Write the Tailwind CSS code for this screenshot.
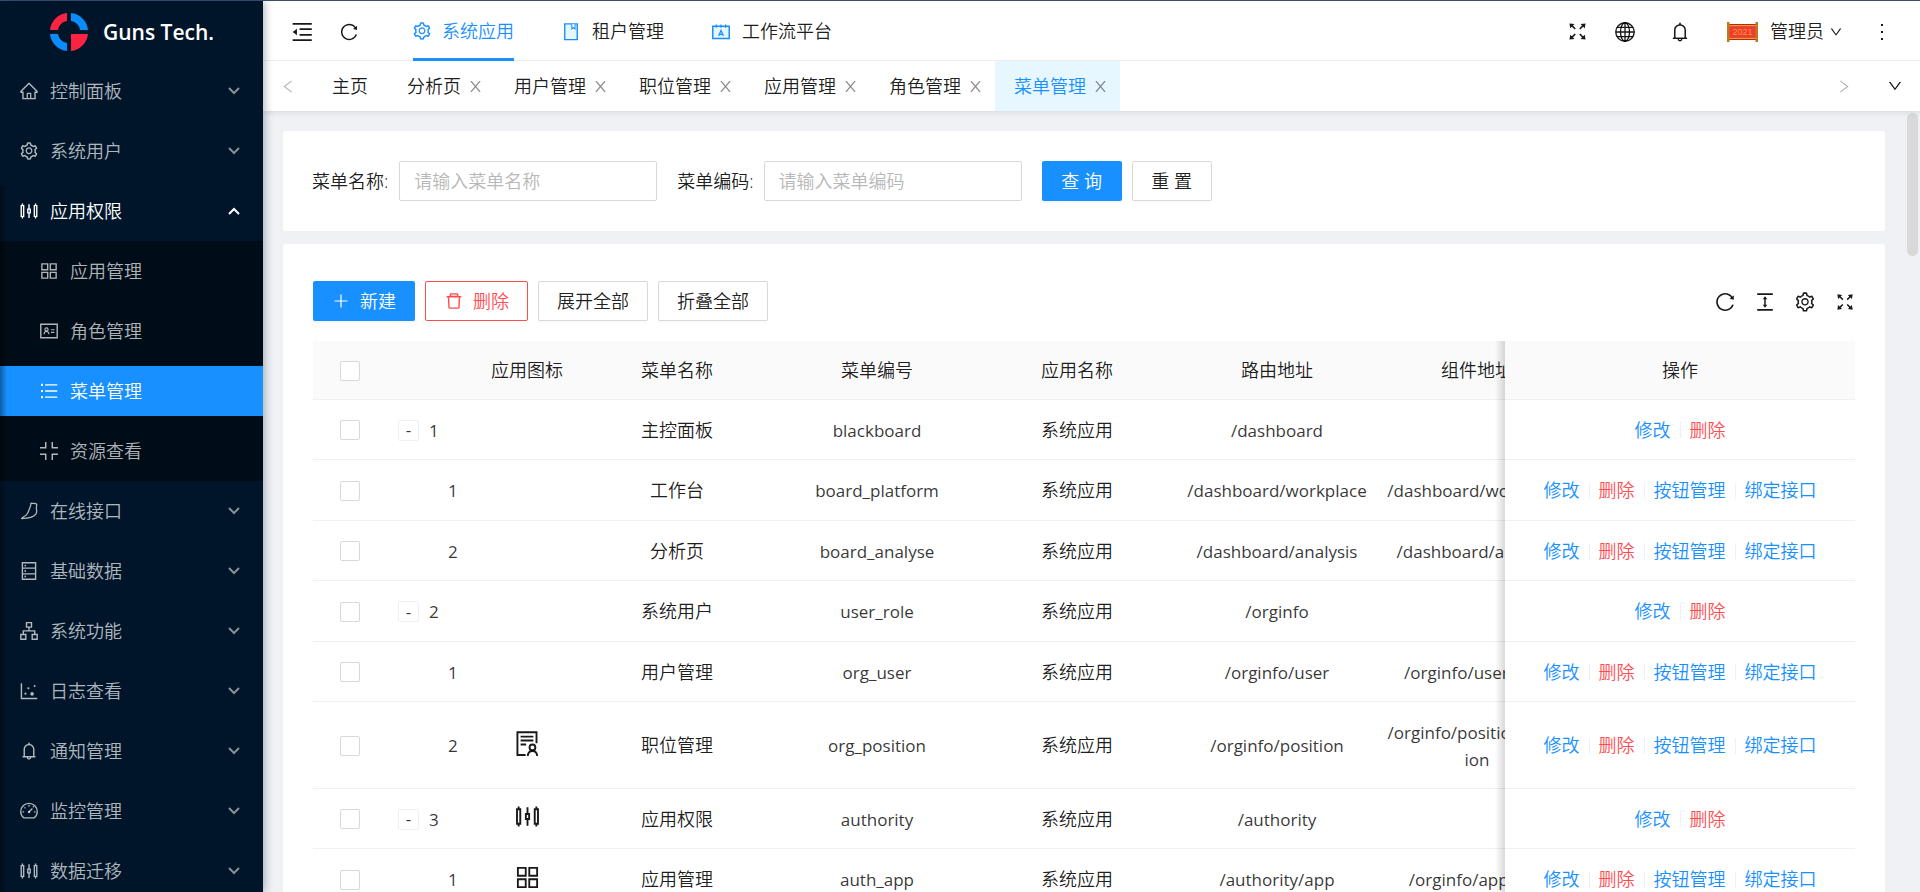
<!DOCTYPE html>
<html lang="zh-CN">
<head>
<meta charset="utf-8">
<title>Guns Tech.</title>
<script src="https://cdn.jsdelivr.net/npm/@tailwindcss/browser@4"></script>
</head>
<body class="h-screen overflow-hidden bg-[#eff1f5] font-['Open_Sans','Noto_Sans_CJK_SC',sans-serif] text-[18px] leading-[27px] font-[350] text-black/90">

<svg class="hidden" aria-hidden="true">
  <defs>
    <symbol id="i-home" viewBox="0 0 1024 1024"><path fill="currentColor" d="M946.5 505L560.1 118.8l-25.9-25.9a31.5 31.5 0 00-44.4 0L77.5 505a63.9 63.9 0 00-18.8 46c.4 35.2 29.7 63.3 64.9 63.3h42.5V940h691.8V614.3h43.4c17.1 0 33.2-6.7 45.3-18.8a63.6 63.6 0 0018.7-45.3c0-17-6.7-33.1-18.8-45.2zM568 868H456V664h112v204zm217.9-325.7V868H632V640c0-22.1-17.9-40-40-40H432c-22.1 0-40 17.9-40 40v228H238.1V542.3h-96l370-369.7 23.1 23.1L882 542.3h-96.1z"/></symbol>
    <symbol id="i-setting" viewBox="0 0 1024 1024"><path fill="currentColor" d="M924.8 625.7l-65.5-56c3.1-19 4.7-38.4 4.7-57.8s-1.6-38.8-4.7-57.8l65.5-56a32.03 32.03 0 009.3-35.2l-.9-2.6a443.74 443.74 0 00-79.7-137.9l-1.8-2.1a32.12 32.12 0 00-35.1-9.5l-81.3 28.9c-30-24.6-63.5-44-99.7-57.6l-15.7-85a32.05 32.05 0 00-25.8-25.7l-2.7-.5c-52.1-9.4-106.9-9.4-159 0l-2.7.5a32.05 32.05 0 00-25.8 25.7l-15.8 85.4a351.86 351.86 0 00-99 57.4l-81.9-29.1a32 32 0 00-35.1 9.5l-1.8 2.1a446.02 446.02 0 00-79.7 137.9l-.9 2.6c-4.5 12.5-.8 26.5 9.3 35.2l66.3 56.6c-3.1 18.8-4.6 38-4.6 57.1 0 19.2 1.5 38.4 4.6 57.1L99 625.5a32.03 32.03 0 00-9.3 35.2l.9 2.6c18.1 50.4 44.9 96.9 79.7 137.9l1.8 2.1a32.12 32.12 0 0035.1 9.5l81.9-29.1c29.8 24.5 63.1 43.9 99 57.4l15.8 85.4a32.05 32.05 0 0025.8 25.7l2.7.5a449.4 449.4 0 00159 0l2.7-.5a32.05 32.05 0 0025.8-25.7l15.7-85a350 350 0 0099.7-57.6l81.3 28.9a32 32 0 0035.1-9.5l1.8-2.1c34.8-41.1 61.6-87.5 79.7-137.9l.9-2.6c4.5-12.3.8-26.3-9.3-35zM788.3 465.9c2.5 15.1 3.8 30.6 3.8 46.1s-1.3 31-3.8 46.1l-6.6 40.1 74.7 63.9a370.03 370.03 0 01-42.6 73.6L721 702.8l-31.4 25.8c-23.9 19.6-50.5 35-79.3 45.8l-38.1 14.3-17.9 97a377.5 377.5 0 01-85 0l-17.9-97.2-37.8-14.5c-28.5-10.8-55-26.2-78.7-45.7l-31.4-25.9-93.4 33.2c-17-22.9-31.2-47.6-42.6-73.6l75.5-64.5-6.5-40c-2.4-14.9-3.7-30.3-3.7-45.5 0-15.3 1.2-30.6 3.7-45.5l6.5-40-75.5-64.5c11.3-26.1 25.6-50.7 42.6-73.6l93.4 33.2 31.4-25.9c23.7-19.5 50.2-34.9 78.7-45.7l37.9-14.3 17.9-97.2c28.1-3.2 56.8-3.2 85 0l17.9 97 38.1 14.3c28.7 10.8 55.4 26.2 79.3 45.8l31.4 25.8 92.8-32.9c17 22.9 31.2 47.6 42.6 73.6L781.8 426l6.5 39.9zM512 326c-97.2 0-176 78.8-176 176s78.8 176 176 176 176-78.8 176-176-78.8-176-176-176zm79.2 255.2A111.6 111.6 0 01512 614c-29.9 0-58-11.7-79.2-32.8A111.6 111.6 0 01400 502c0-29.9 11.7-58 32.8-79.2C454 401.6 482.1 390 512 390c29.9 0 58 11.6 79.2 32.8A111.6 111.6 0 01624 502c0 29.9-11.7 58-32.8 79.2z"/></symbol>
    <symbol id="i-reload" viewBox="0 0 1024 1024"><path fill="currentColor" d="M909.1 209.3l-56.4 44.1C775.8 155.1 656.2 92 521.9 92 290 92 102.3 279.5 102 511.5 101.7 743.7 289.8 932 521.9 932c181.3 0 335.8-115 394.6-276.1 1.5-4.2-.7-8.9-4.9-10.3l-56.7-19.5a8 8 0 00-10.1 4.8c-1.8 5-3.8 10-5.9 14.9-17.3 41-42.1 77.8-73.7 109.4A344.77 344.77 0 01655.9 829c-42.3 17.9-87.4 27-133.8 27-46.5 0-91.5-9.1-133.8-27A341.5 341.5 0 01279 755.2a342.16 342.16 0 01-73.7-109.4c-17.9-42.4-27-87.4-27-133.9s9.1-91.5 27-133.9c17.3-41 42.1-77.8 73.7-109.4 31.6-31.6 68.4-56.4 109.3-73.8 42.3-17.9 87.4-27 133.8-27 46.5 0 91.5 9.1 133.8 27a341.5 341.5 0 01109.3 73.8c9.9 9.9 19.2 20.4 27.8 31.4l-60.2 47a8 8 0 003 14.1l175.6 43c5 1.2 9.9-2.6 9.9-7.7l.8-180.9c-.1-6.6-7.8-10.3-13-6.2z"/></symbol>
    <symbol id="i-down" viewBox="0 0 1024 1024"><path fill="currentColor" d="M884 256h-75c-5.1 0-9.9 2.5-12.9 6.6L512 654.2 227.9 262.6c-3-4.1-7.8-6.6-12.9-6.6h-75c-6.5 0-10.3 7.4-6.5 12.7l352.6 486.1c12.8 17.6 39 17.6 51.7 0l352.6-486.1c3.9-5.3.1-12.7-6.4-12.7z"/></symbol>
    <symbol id="i-bell" viewBox="0 0 1024 1024"><path fill="currentColor" d="M816 768h-24V428c0-141.1-104.3-257.7-240-277.1V112c0-22.1-17.9-40-40-40s-40 17.9-40 40v38.900c-135.700 19.400-240 136-240 277.100v340h-24c-17.700 0-32 14.300-32 32v32c0 4.400 3.600 8 8 8h216c0 61.800 50.200 112 112 112s112-50.200 112-112h216c4.400 0 8-3.600 8-8v-32c0-17.700-14.300-32-32-32zM512 888c-26.500 0-48-21.500-48-48h96c0 26.500-21.500 48-48 48zM304 768V428c0-55.600 21.600-107.800 60.900-147.100S456.400 220 512 220c55.600 0 107.800 21.600 147.100 60.900S720 372.400 720 428v340H304z"/></symbol>
    <symbol id="i-delete" viewBox="0 0 1024 1024"><path fill="currentColor" fill-opacity=".3" d="M352 176h320v80H352z"/><path fill="currentColor" d="M360 184h-8c4.400 0 8-3.600 8-8v8h304v-8c0 4.400 3.600 8 8 8h-8v72h72v-80c0-35.300-28.700-64-64-64H352c-35.300 0-64 28.700-64 64v80h72v-72zm504 72H160c-17.700 0-32 14.300-32 32v32c0 4.400 3.600 8 8 8h60.400l24.700 523c1.600 34.100 29.800 61 63.900 61h454c34.200 0 62.300-26.800 63.900-61l24.700-523H888c4.400 0 8-3.600 8-8v-32c0-17.700-14.300-32-32-32zM731.300 840H292.700l-24.200-512h487l-24.200 512z"/></symbol>
    <symbol id="i-sliders" viewBox="0 0 1024 1024"><g fill="none" stroke="currentColor" stroke-width="72"><path d="M114 236h124v552H114zM176 130v106M176 788v106M450 418h124v188H450zM512 160v258M512 606v258M786 236h124v552H786zM848 130v106M848 788v106"/></g></symbol>
    <symbol id="i-app" viewBox="0 0 1024 1024"><path fill="none" stroke="currentColor" stroke-width="70" d="M147 147h298v298H147zM579 147h298v298H579zM147 579h298v298H147zM579 579h298v298H579z"/></symbol>
    <symbol id="i-idcard" viewBox="-57 -57 1138 1138"><g fill="none" stroke="currentColor"><path stroke-width="80" d="M45 130h934v764H45z"/><circle cx="370" cy="420" r="90" stroke-width="68"/><path stroke-width="68" d="M226 700c10-100 60-160 144-160s134 60 144 160M620 440h200M620 590h200"/></g></symbol>
    <symbol id="i-list" viewBox="0 0 1024 1024"><path fill="currentColor" d="M312 164h624v72H312zM312 476h624v72H312zM312 788h624v72H312zM104 144h96v112h-96zM104 456h96v112h-96zM104 768h96v112h-96z"/></symbol>
    <symbol id="i-compress" viewBox="-57 -57 1138 1138"><path fill="none" stroke="currentColor" stroke-width="84" d="M0 326h326V0M698 0v326h326M0 698h326v326M698 1024V698h326"/></symbol>
    <symbol id="i-interface" viewBox="0 0 1024 1024"><path fill="none" stroke="currentColor" stroke-width="64" stroke-linejoin="round" d="M610 110c70 40 200-20 290 40 20 80-20 160-10 250 10 90 50 160-30 270-110 150-360 220-730 230 60-80 170-110 250-190 90-90 110-190 150-300 30-100 90-160 80-300z"/></symbol>
    <symbol id="i-database" viewBox="-57 -57 1138 1138"><path fill="none" stroke="currentColor" stroke-width="78" d="M136 44h752v936H136zM136 352h752M136 672h752"/><g fill="currentColor"><circle cx="300" cy="200" r="50"/><circle cx="300" cy="512" r="50"/><circle cx="300" cy="824" r="50"/></g></symbol>
    <symbol id="i-apartment" viewBox="-40 -40 1104 1104"><path fill="none" stroke="currentColor" stroke-width="76" d="M374 50h276v250H374zM60 704h276v266H60zM688 704h276v266H688zM512 300v200M198 704V506h628v198"/></symbol>
    <symbol id="i-dot" viewBox="0 0 1024 1024"><path fill="none" stroke="currentColor" stroke-width="72" d="M124 110v784h810"/><g fill="currentColor"><circle cx="330" cy="650" r="56"/><circle cx="670" cy="660" r="92"/><circle cx="480" cy="370" r="56"/><circle cx="800" cy="260" r="52"/></g></symbol>
    <symbol id="i-dashboard" viewBox="-45 -35 1114 1114"><g fill="none" stroke="currentColor" stroke-width="72"><path d="M220 900C110 810 50 690 50 560a462 462 0 01924 0c0 130-60 250-170 340z"/><path d="M512 580l190-200M512 190v90M150 570h90M784 570h90M260 320l54 54M728 316l54-54"/></g><circle cx="512" cy="580" r="68" fill="currentColor"/></symbol>
    <symbol id="i-fold" viewBox="0 0 1024 1024"><path fill="currentColor" d="M112 124h816v80H112zM408 350h520v76H408zM408 598h520v76H408zM112 820h816v80H112zM116 512l180-142v284z"/></symbol>
    <symbol id="i-expand" viewBox="0 0 1024 1024"><path fill="currentColor" d="M120 120l246 28-76 76 138 138-54 54-138-138-78 78zM904 120l-246 28 76 76-138 138 54 54 138-138 78 78zM120 904l246-28-76-76 138-138-54-54-138 138-78-78zM904 904l-246-28 76-76-138-138 54-54 138 138 78-78z"/></symbol>
    <symbol id="i-globe" viewBox="0 0 1024 1024"><g fill="none" stroke="currentColor" stroke-width="62"><circle cx="512" cy="512" r="430"/><ellipse cx="512" cy="512" rx="210" ry="430"/><path d="M512 82v860M82 512h860M140 300h744M140 724h744"/></g></symbol>
    <symbol id="i-colheight" viewBox="0 0 1024 1024"><path fill="currentColor" d="M112 70h800v78H112zM112 876h800v78H112zM512 220l116 150h-78v284h78L512 804 396 654h78V370h-78z"/></symbol>
    <symbol id="i-audit" viewBox="0 0 1024 1024"><g fill="none" stroke="currentColor" stroke-width="72"><path d="M440 950H130V85h724v420M250 250h484M250 400h484M250 550h210"/><circle cx="700" cy="660" r="110"/><path d="M520 985c10-120 80-190 180-190s170 70 180 190"/></g></symbol>
    <symbol id="i-book" viewBox="-57 -45 1138 1138"><path fill="#e6f7ff" stroke="currentColor" stroke-width="80" d="M156 64h712v896H156z"/><path fill="#fff" stroke="currentColor" stroke-width="60" d="M560 90v260l90-70 90 70V90"/></symbol>
    <symbol id="i-calendar" viewBox="-50 -50 1124 1124"><path fill="#e6f7ff" stroke="currentColor" stroke-width="84" d="M50 190h924v690H50z"/><path fill="none" stroke="currentColor" stroke-width="72" d="M250 90v190M510 90v190M774 90v190M380 740l132-320 132 320M430 640h164"/></symbol>
    <symbol id="i-arrow" viewBox="0 0 12 8"><path fill="none" stroke="currentColor" stroke-width="2" d="M1 1l5 5 5-5"/></symbol>
    <symbol id="i-x" viewBox="0 0 12 12"><path fill="none" stroke="currentColor" stroke-width="1.300" d="M1 0l10 12M11 0L1 12"/></symbol>
    <symbol id="i-chev" viewBox="0 0 10 14"><path fill="none" stroke="currentColor" stroke-width="1.200" d="M9 1L1 7l8 6"/></symbol>
  </defs>
</svg>

<div class="flex h-full flex-col border-t border-[#3b5174]">
  <div class="flex min-h-0 flex-1">

    <aside class="relative z-20 flex w-[263px] shrink-0 flex-col bg-[#001529] shadow-[2px_0_8px_rgba(0,21,41,0.3)]">
      <a href="#" class="flex h-[60px] shrink-0 items-center gap-[15px] pt-[2px] pl-[50px] text-[21px] font-semibold text-white">
        <svg class="size-[38px]" viewBox="0 0 38 38" aria-hidden="true">
          <path fill="#fa2342" d="M17 0v8A11 11 0 0 0 8 17H0A19 19 0 0 1 17 0zM21 21h17a19 19 0 0 1-17 17z"/>
          <path fill="#0a8cff" d="M21 0a19 19 0 0 1 17 17h-8a11 11 0 0 0-9-9zM0 21h8a11 11 0 0 0 9 9v8A19 19 0 0 1 0 21z"/>
        </svg>
        Guns Tech.
      </a>
      <nav class="min-h-0 flex-1 overflow-hidden" aria-label="主菜单"><ul id="menu"></ul></nav>
      <div class="pointer-events-none absolute top-[185px] bottom-0 left-0 w-[7px] bg-linear-to-r from-black/35 to-transparent"></div>
    </aside>

    <div class="flex min-w-0 flex-1 flex-col">
      <header class="relative z-10 shrink-0 bg-white shadow-[0_1px_6px_rgba(0,21,41,0.12)]">
        <div class="flex h-[60px] items-center border-b border-[#eeeeee] pt-[2px]">
          <button class="ml-[27px]" aria-label="收起菜单"><svg class="size-[24px]"><use href="#i-fold"/></svg></button>
          <button class="ml-[25px]" aria-label="刷新"><svg class="size-[20px]"><use href="#i-reload"/></svg></button>
          <nav class="-mt-[2px] ml-[54px] flex h-[60px] gap-[48px]" aria-label="应用">
            <a href="#" class="flex items-center gap-[10px] border-b-[3px] border-[#1890ff] pt-[4px] text-[#1890ff]"><svg class="-ml-px size-[20px]"><use href="#i-setting"/></svg>系统应用</a>
            <a href="#" class="flex items-center gap-[11px] pt-[2px]"><svg class="-ml-px size-[20px] text-[#1890ff]"><use href="#i-book"/></svg>租户管理</a>
            <a href="#" class="flex items-center gap-[11px] pt-[2px]"><svg class="-ml-px size-[20px] text-[#1890ff]"><use href="#i-calendar"/></svg>工作流平台</a>
          </nav>
          <div class="ml-auto flex items-center">
            <button aria-label="全屏"><svg class="size-[21px]"><use href="#i-expand"/></svg></button>
            <button class="ml-[26px]" aria-label="语言"><svg class="size-[22px]"><use href="#i-globe"/></svg></button>
            <button class="ml-[33px]" aria-label="消息"><svg class="size-[22px]"><use href="#i-bell"/></svg></button>
            <button class="ml-[36px] flex items-center">
              <svg class="h-[20px] w-[31px]" viewBox="0 0 31 20" aria-hidden="true">
                <path fill="#b5262b" d="M2 2h27v16H2z"/><path fill="#f8a01c" d="M2 3h27v1.500H2zM2 15.500h27V17H2z"/><path fill="#f03a35" d="M2 4.500h27v11H2z"/>
                <path fill="#c0781a" d="M0 0h2.500v20H0zM28.500 0H31v20h-2.500z"/>
                <text x="15.500" y="13" text-anchor="middle" font-family="Liberation Sans" font-size="9" font-weight="normal" fill="#f9a01f">2021</text>
              </svg>
              <span class="ml-[12px]">管理员</span>
              <svg class="ml-[5px] size-[14px]"><use href="#i-down"/></svg>
            </button>
            <button class="mr-[28px] ml-[29px]" aria-label="更多"><svg class="size-[20px]" viewBox="0 0 20 20"><g fill="currentColor"><rect x="9" y="2" width="2" height="2"/><rect x="9" y="9" width="2" height="2"/><rect x="9" y="16" width="2" height="2"/></g></svg></button>
          </div>
        </div>
        <div class="flex h-[50px] items-center">
          <button class="mr-[21px] ml-[20px] text-black/30" aria-label="向左"><svg class="h-[13px] w-[10px]"><use href="#i-chev"/></svg></button>
          <div class="flex h-full" id="tabs"></div>
          <button class="ml-auto text-black/30" aria-label="向右"><svg class="h-[13px] w-[10px] rotate-180"><use href="#i-chev"/></svg></button>
          <button class="mr-[17px] ml-[38px]" aria-label="标签操作"><svg class="size-[16px]"><use href="#i-down"/></svg></button>
        </div>
      </header>

      <main class="relative flex min-h-0 flex-1 flex-col gap-[13px] overflow-hidden pt-[20px] pr-[35px] pl-[20px]">
        <form class="flex h-[100px] shrink-0 items-center rounded-[2px] bg-white px-[29px]" onsubmit="return false">
          <label for="menuName" class="mr-[11px]">菜单名称:</label>
          <input id="menuName" type="text" placeholder="请输入菜单名称" class="h-[40px] w-[258px] rounded-[2px] border border-[#d9d9d9] px-[14px] placeholder:text-[#b8b8b8]">
          <label for="menuCode" class="mr-[10px] ml-[20px]">菜单编码:</label>
          <input id="menuCode" type="text" placeholder="请输入菜单编码" class="h-[40px] w-[258px] rounded-[2px] border border-[#d9d9d9] px-[14px] placeholder:text-[#b8b8b8]">
          <button type="submit" class="ml-[20px] h-[40px] w-[80px] rounded-[2px] bg-[#1890ff] text-white shadow-[0_2px_0_rgba(0,0,0,0.04)]">查 询</button>
          <button type="reset" class="ml-[10px] h-[40px] w-[80px] rounded-[2px] border border-[#d9d9d9] bg-white shadow-[0_2px_0_rgba(0,0,0,0.02)]">重 置</button>
        </form>

        <section class="shrink-0 rounded-[2px] bg-white px-[30px] pt-[37px] pb-[30px]">
          <div class="flex items-center gap-[10px]">
            <button class="flex h-[40px] items-center gap-[10px] rounded-[2px] bg-[#1890ff] px-[19px] text-white shadow-[0_2px_0_rgba(0,0,0,0.04)]"><svg class="size-[18px]" viewBox="0 0 18 18"><path stroke="currentColor" stroke-width="1.200" d="M9 2.500v13M2.500 9h13"/></svg>新建</button>
            <button class="flex h-[40px] items-center gap-[9px] rounded-[2px] border border-[#ff4d4f] bg-white px-[18px] text-[#ff4d4f]"><svg class="size-[20px]"><use href="#i-delete"/></svg>删除</button>
            <button class="h-[40px] rounded-[2px] border border-[#d9d9d9] bg-white px-[18px] shadow-[0_2px_0_rgba(0,0,0,0.02)]">展开全部</button>
            <button class="h-[40px] rounded-[2px] border border-[#d9d9d9] bg-white px-[18px] shadow-[0_2px_0_rgba(0,0,0,0.02)]">折叠全部</button>
            <div class="ml-auto flex items-center gap-[19px] pt-[2px]">
              <button aria-label="刷新表格"><svg class="size-[22px]"><use href="#i-reload"/></svg></button>
              <button aria-label="密度"><svg class="size-[20px]"><use href="#i-colheight"/></svg></button>
              <button aria-label="列设置"><svg class="size-[22px]"><use href="#i-setting"/></svg></button>
              <button aria-label="全屏表格"><svg class="size-[20px]"><use href="#i-expand"/></svg></button>
            </div>
          </div>
          <div class="mt-[20px] overflow-hidden">
            <table class="w-full min-w-[1614px] table-fixed border-separate border-spacing-0 text-center">
              <colgroup><col class="w-[74px]"><col class="w-[90px]"><col class="w-[100px]"><col class="w-[200px]"><col class="w-[200px]"><col class="w-[200px]"><col class="w-[200px]"><col class="w-[200px]"><col class="w-[350px]"></colgroup>
              <thead>
                <tr class="h-[59px]">
                  <th class="border-b border-[#f0f0f0] bg-[#fafafa] pt-px font-[350]"><input type="checkbox" aria-label="全选" class="mx-auto block size-[20px] appearance-none rounded-[2px] border border-[#d9d9d9] bg-white"></th>
                  <th class="border-b border-[#f0f0f0] bg-[#fafafa]"></th>
                  <th class="border-b border-[#f0f0f0] bg-[#fafafa] pt-px font-[350]">应用图标</th>
                  <th class="border-b border-[#f0f0f0] bg-[#fafafa] pt-px font-[350]">菜单名称</th>
                  <th class="border-b border-[#f0f0f0] bg-[#fafafa] pt-px font-[350]">菜单编号</th>
                  <th class="border-b border-[#f0f0f0] bg-[#fafafa] pt-px font-[350]">应用名称</th>
                  <th class="border-b border-[#f0f0f0] bg-[#fafafa] pt-px font-[350]">路由地址</th>
                  <th class="border-b border-[#f0f0f0] bg-[#fafafa] pt-px font-[350]">组件地址</th>
                  <th class="sticky right-0 border-b border-[#f0f0f0] bg-[#fafafa] pt-px font-[350] before:absolute before:top-0 before:-bottom-px before:-left-[10px] before:w-[10px] before:bg-linear-to-l before:from-black/15 before:to-transparent">操作</th>
                </tr>
              </thead>
              <tbody id="rows"></tbody>
            </table>
          </div>
        </section>
        <div class="absolute top-[2px] right-[2px] h-[143px] w-[11px] rounded-full bg-[#d9d9d9]"></div>
      </main>
    </div>
  </div>
</div>

<script>
const icon = (id, cls) => `<svg class="${cls}" aria-hidden="true"><use href="#i-${id}"/></svg>`;

const menu = [
  ['home', '控制面板'], ['setting', '系统用户'],
  ['sliders', '应用权限', [['app', '应用管理'], ['idcard', '角色管理'], ['list', '菜单管理', true], ['compress', '资源查看']]],
  ['interface', '在线接口'], ['database', '基础数据'], ['apartment', '系统功能'], ['dot', '日志查看'],
  ['bell', '通知管理'], ['dashboard', '监控管理'], ['sliders', '数据迁移']
];
document.getElementById('menu').innerHTML = menu.map(([ic, name, subs]) => `
  <li>
    <div class="py-[5px]"><a href="#" class="flex h-[50px] items-center gap-[11px] pr-[23px] pl-[19px] ${subs ? 'text-white' : 'text-white/70'}">
      ${icon(ic, 'size-[20px]')}<span class="flex-1">${name}</span>${icon('arrow', subs ? 'h-[8px] w-[12px] rotate-180' : 'h-[8px] w-[12px] opacity-75')}
    </a></div>
    ${subs ? `<ul class="bg-[#000c17]">${subs.map(([si, sn, on]) => `
      <li class="py-[5px]"><a href="#" class="flex h-[50px] items-center gap-[11px] pl-[39px] ${on ? 'bg-[#1890ff] text-white' : 'text-white/70'}">${icon(si, 'size-[20px]')}${sn}</a></li>`).join('')}</ul>` : ''}
  </li>`).join('');

const tabs = ['主页', '分析页', '用户管理', '职位管理', '应用管理', '角色管理', '菜单管理'];
document.getElementById('tabs').innerHTML = tabs.map((t, i) => i === 0
  ? `<a href="#" class="flex items-center pr-[20px] pl-[18px]">${t}</a>`
  : `<div class="flex items-center gap-[9px] pr-[14px] pl-[19px] ${i === tabs.length - 1 ? 'bg-[#e6f7ff] text-[#1890ff]' : ''}"><a href="#">${t}</a><button class="text-black/45" aria-label="关闭${t}">${icon('x', 'size-[11px]')}</button></div>`).join('');

const rows = [
  [0, '1', '', '主控面板', 'blackboard', '/dashboard', ''],
  [1, '1', '', '工作台', 'board_platform', '/dashboard/workplace', '/dashboard/workplace'],
  [1, '2', '', '分析页', 'board_analyse', '/dashboard/analysis', '/dashboard/analysis'],
  [0, '2', '', '系统用户', 'user_role', '/orginfo', ''],
  [1, '1', '', '用户管理', 'org_user', '/orginfo/user', '/orginfo/user/user'],
  [1, '2', 'audit', '职位管理', 'org_position', '/orginfo/position', '/orginfo/position/posit<wbr>ion'],
  [0, '3', 'sliders', '应用权限', 'authority', '/authority', ''],
  [1, '1', 'app', '应用管理', 'auth_app', '/authority/app', '/orginfo/app/app']
];
const td = 'border-b border-[#f0f0f0] px-[10px] pt-px';
const sep = '<span class="h-[16px] w-px bg-[#f0f0f0]"></span>';
document.getElementById('rows').innerHTML = rows.map(([lvl, no, ic, name, code, route, comp], i) => `
  <tr class="${i === 5 ? 'h-[87px]' : i % 2 ? 'h-[61px]' : 'h-[60px]'}">
    <td class="border-b border-[#f0f0f0] pt-px"><input type="checkbox" aria-label="选择${name}" class="mx-auto block size-[20px] appearance-none rounded-[2px] border border-[#d9d9d9] bg-white"></td>
    <td class="border-b border-[#f0f0f0] pt-px text-[17px] font-normal text-black/80">${lvl
      ? `<div class="pl-[61px] text-left">${no}</div>`
      : `<div class="flex items-center gap-[10px] pl-[11px]"><button class="size-[21px] rounded-[2px] border border-[#f0f0f0] leading-[18px]" aria-label="收起${name}">-</button>${no}</div>`}</td>
    <td class="border-b border-[#f0f0f0]">${ic ? icon(ic, 'mx-auto mb-[4px] size-[27px]') : ''}</td>
    <td class="${td}">${name}</td>
    <td class="${td} text-[17px] font-normal text-black/80">${code}</td>
    <td class="${td}">系统应用</td>
    <td class="${td} text-[17px] font-normal text-black/80">${route}</td>
    <td class="${td} text-[17px] font-normal text-black/80">${comp}</td>
    <td class="sticky right-0 border-b border-[#f0f0f0] bg-white pt-px before:absolute before:top-0 before:-bottom-px before:-left-[10px] before:w-[10px] before:bg-linear-to-l before:from-black/15 before:to-transparent">
      <div class="flex items-center justify-center gap-[9px] text-[#1890ff]">
        <a href="#">修改</a>${sep}<a href="#" class="text-[#ff4d4f]">删除</a>${lvl ? `${sep}<a href="#">按钮管理</a>${sep}<a href="#">绑定接口</a>` : ''}
      </div>
    </td>
  </tr>`).join('');
</script>
</body>
</html>
